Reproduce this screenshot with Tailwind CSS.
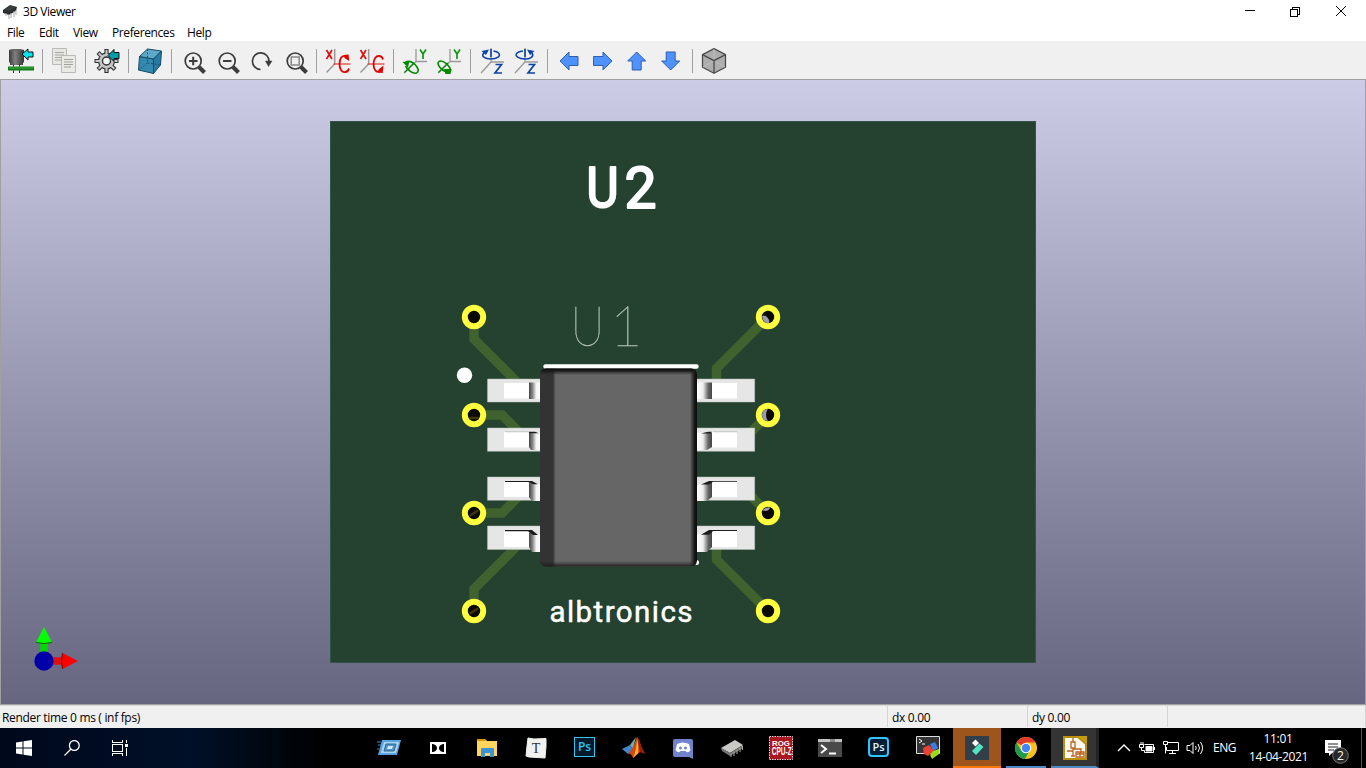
<!DOCTYPE html>
<html lang="en">
<head>
<meta charset="utf-8">
<title>3D Viewer</title>
<script src="https://cdn.jsdelivr.net/npm/@tailwindcss/browser@4"></script>
</head>
<body class="w-[1366px] h-[768px] overflow-hidden bg-white text-black text-[12px] font-['Open_Sans','Noto_Sans',sans-serif]">
<div class="flex flex-col w-[1366px] h-[768px]">

<header class="flex h-[22px] items-center shrink-0">
  <svg class="ml-[2px] w-4 h-4" viewBox="0 0 16 16"><path d="M1 7 8 2 15 4 14 8 7 12 1 10Z" fill="#292d2d"/><path d="M4 10v3M7 11v5M9 10v5M12 8v6M14 7v5" stroke="#aaa" stroke-width="1"/><path d="M2 7 8 3l6 1-6 4Z" fill="#3b3f3f"/></svg>
  <span class="ml-[5px] mt-[2px] text-[12px] tracking-[-0.45px] w-[60px] whitespace-nowrap">3D Viewer</span>
  <svg class="ml-auto mr-[18px] w-[104px] h-[14px]" viewBox="0 0 104 14" fill="none" stroke="#000" stroke-width="1" shape-rendering="crispEdges"><path d="M1 6.500h10M46.500 5.500h7v7h-7zM48.500 5v-1.500h7v7H54"/><path d="m92 2 10 10M102 2 92 12" shape-rendering="auto"/></svg>
</header>

<nav class="flex h-[19px] shrink-0 items-center text-[12px] tracking-[-0.4px] pl-[7px] pt-[2px] whitespace-nowrap">
  <span class="w-8">File</span><span class="w-[34px]">Edit</span><span class="w-[39px]">View</span><span class="w-[75px]">Preferences</span><span>Help</span>
</nav>

<div class="flex h-[38px] shrink-0 bg-[#f0f0f0] pl-1 items-center pt-[2px]">
  <div class="w-[34px] flex justify-center"><svg class="w-[26px] h-[26px]" viewBox="0 0 26 26"><defs><linearGradient id="cap"><stop stop-color="#3a3a3a"/><stop offset=".4" stop-color="#808080"/><stop offset="1" stop-color="#333"/></linearGradient></defs><path d="M1 2q7-2 15 0v11q0 2-1 2v2H2v-2q-1 0-1-2Z" fill="url(#cap)"/><path d="M1 2q7-2 15 0-7 1.500-15 0" fill="#666"/><rect x="0" y="18.500" width="26" height="4" fill="#127a18"/><path d="M1 20h24" stroke="#3fae3f"/><path d="M5.500 16.500v2M11.500 16.500v2M5.500 22.500v2.500M11.500 22.500v2.500" stroke="#222"/><path d="m14 6 6-5v3h5v5h-5v3Z" fill="#00e5ee" stroke="#111"/></svg></div>
  <div class="w-[9px] flex justify-center"><i class="w-px h-6 bg-[#a0a0a0]"></i></div>
  <div class="w-[34px] flex justify-center"><svg class="w-[26px] h-[26px]" viewBox="0 0 26 26"><path d="M1.500.5h14v16h-14Z" fill="#e6e6e3" stroke="#b9b9b7"/><path d="M4 4.500h9M4 7h9M4 9.500h6M4 12h6" stroke="#a9a9a9"/><path d="M10.500 7.500h14v17h-14Z" fill="#e9e9e6" stroke="#b9b9b7"/><path d="M13 11.500h9M13 14h9M13 16.500h9M13 19h7" stroke="#a0a0a0"/></svg></div>
  <div class="w-[9px] flex justify-center"><i class="w-px h-6 bg-[#a0a0a0]"></i></div>
  <div class="w-[34px] flex justify-center"><svg class="w-[26px] h-[26px]" viewBox="0 0 26 26"><g stroke="#333" stroke-width="4.200"><path d="M12.500 1v24M.5 13h24M4 4.500l17 17M21 4.500l-17 17"/></g><circle cx="12.500" cy="13" r="8" fill="#c4c4c4" stroke="#3a3a3a" stroke-width="1.300"/><g stroke="#c8c8c8" stroke-width="2"><path d="M12.500 2v22M1.500 13h22M4.700 5.200l15.600 15.600M20.300 5.200 4.700 20.800"/></g><circle cx="12.500" cy="13" r="4" fill="#f7f7f7" stroke="#333" stroke-width="1.400"/><path d="m14 7.500 6-6v3h5v6h-5v3Z" fill="#049ca5" stroke="#111"/></svg></div>
  <div class="w-[9px] flex justify-center"><i class="w-px h-6 bg-[#a0a0a0]"></i></div>
  <div class="w-[34px] flex justify-center"><svg class="w-[26px] h-[26px]" viewBox="0 0 26 26" stroke="#154b63" stroke-linejoin="round"><path d="m2.500 8.500 14 2.500v14.500L1.500 22Z" fill="#3489b0"/><path d="m2.500 8.500 8-7.500 14 2-8 8Z" fill="#5fa9c8"/><path d="m16.500 11 8-8-1 14-7 8.500Z" fill="#287aa0"/><path d="M10.500 1v14l-9 7M10.500 15l13 2" stroke-dasharray="2 1.500" stroke-width=".8" fill="none"/></svg></div>
  <div class="w-[9px] flex justify-center"><i class="w-px h-6 bg-[#a0a0a0]"></i></div>

  <div class="w-[34px] flex justify-center"><svg class="w-[26px] h-[26px]" viewBox="0 0 26 26" fill="none" stroke="#3c3c3c" stroke-width="1.700"><circle cx="13.200" cy="13" r="8"/><path d="M9 13h8.500M13.200 8.800v8.400" stroke-width="2"/><path d="m19 19 5.500 5.500" stroke-width="4"/></svg></div>
  <div class="w-[34px] flex justify-center"><svg class="w-[26px] h-[26px]" viewBox="0 0 26 26" fill="none" stroke="#3c3c3c" stroke-width="1.700"><circle cx="13.200" cy="13" r="8"/><path d="M9 13h8.500" stroke-width="2"/><path d="m19 19 5.500 5.500" stroke-width="4"/></svg></div>
  <div class="w-[34px] flex justify-center"><svg class="w-[26px] h-[26px]" viewBox="0 0 26 26" fill="none" stroke="#3c3c3c" stroke-width="1.700"><path d="M12.500 21.500a8.300 8.300 0 1 1 8.500-8"/><path d="M17.500 13h6.500L20.500 18.500Z" fill="#3c3c3c" stroke-width=".5"/></svg></div>
  <div class="w-[34px] flex justify-center"><svg class="w-[26px] h-[26px]" viewBox="0 0 26 26" fill="none" stroke="#3c3c3c" stroke-width="1.700"><circle cx="13.200" cy="13" r="8"/><path d="M9.200 9h8v8h-8Z" stroke="#888" stroke-width="1.500"/><path d="m19 19 5.500 5.500" stroke-width="4"/></svg></div>
  <div class="w-[9px] flex justify-center"><i class="w-px h-6 bg-[#a0a0a0]"></i></div>

  <div class="w-[34px] flex justify-center"><svg class="w-[26px] h-[26px]" viewBox="0 0 26 26" fill="none"><path d="M9.700 1v15L1.500 24.500" stroke="#999" stroke-width="1.500"/><path d="m1.500 2 5.500 9M7 2 1.500 11" stroke="#d11" stroke-width="1.700"/><path d="M8.500 16h17" stroke="#e23535" stroke-width="1.200"/><path d="M21 8c-4-1-6.500 2.500-6.500 8s2.500 8.500 5.500 8.200c2.500-.2 3.500-1.700 4-3.700" stroke="#e00000" stroke-width="1.800"/><path d="m19 7 4.500-.5.800 6.500-4.800-3Z" fill="#e00000"/></svg></div>
  <div class="w-[34px] flex justify-center"><svg class="w-[26px] h-[26px]" viewBox="0 0 26 26" fill="none"><path d="M9.700 1v15L1.500 24.500" stroke="#999" stroke-width="1.500"/><path d="m1.500 2 5.500 9M7 2 1.500 11" stroke="#d11" stroke-width="1.700"/><path d="M8.500 16h17" stroke="#e23535" stroke-width="1.200"/><path d="M24 11.500c-.5-2-1.500-3.200-3.500-3.500-3.500-.5-6 3-6 8 0 6 3 9 7 7.500" stroke="#e00000" stroke-width="1.800"/><path d="m19.500 21.500 5-4-.8 7.500-4.700-.5Z" fill="#e00000"/></svg></div>
  <div class="w-[9px] flex justify-center"><i class="w-px h-6 bg-[#a0a0a0]"></i></div>
  <div class="w-[34px] flex justify-center"><svg class="w-[26px] h-[26px]" viewBox="0 0 26 26" fill="none"><path d="M14 1v12.500h11M14 13.500 2 25" stroke="#999" stroke-width="1.300"/><path d="m18 1.500 3 4.500 3-4.500M21 6v5" stroke="#139313" stroke-width="1.700"/><path d="M3.500 18C6 22.500 11 26 14.500 25c3.500-1.500 1-6.500-2.500-9.500-3-2.200-6-3-8.500-1" stroke="#008a00" stroke-width="1.600"/><path d="M2.500 24.500 12 15" stroke="#008a00" stroke-width="1.300"/><path d="m.5 14 7-1-1.500 6.500Z" fill="#008a00"/></svg></div>
  <div class="w-[34px] flex justify-center"><svg class="w-[26px] h-[26px]" viewBox="0 0 26 26" fill="none"><path d="M14 1v12.500h11M14 13.500 2 25" stroke="#999" stroke-width="1.300"/><path d="m18 1.500 3 4.500 3-4.500M21 6v5" stroke="#139313" stroke-width="1.700"/><path d="M10.500 24C5 22 0 16 3 13.500c3.500-2 11.500 4 11.500 9.500" stroke="#008a00" stroke-width="1.600"/><path d="M2.500 24.500 12 15" stroke="#008a00" stroke-width="1.300"/><path d="m8 21 7.500 0-1 5-5 .2Z" fill="#008a00"/></svg></div>
  <div class="w-[9px] flex justify-center"><i class="w-px h-6 bg-[#a0a0a0]"></i></div>
  <div class="w-[34px] flex justify-center"><svg class="w-[26px] h-[26px]" viewBox="0 0 26 26" fill="none"><path d="M12 0v14h13M12 14 2 25" stroke="#999" stroke-width="1.300"/><path d="M5.500 4.500C1 8 6 11 12 11s10.500-3 7.500-6c-1-1-3-1.700-5-2M12 1v8" stroke="#0b43a8" stroke-width="1.600"/><path d="m2.500 3 7.500-1.500-3 5.500Z" fill="#0b43a8"/><path d="M16.500 16.500h6l-6.500 8.500h7" stroke="#0b43a8" stroke-width="1.700"/></svg></div>
  <div class="w-[34px] flex justify-center"><svg class="w-[26px] h-[26px]" viewBox="0 0 26 26" fill="none"><path d="M12 0v14h13M12 14 2 25" stroke="#999" stroke-width="1.300"/><path d="M10 3c-3 .3-5 1-6 2-3 3 2 6 8 6 5 0 9.500-2.500 7-6M12 1v8" stroke="#0b43a8" stroke-width="1.600"/><path d="m14 1.500 7.500 1.500-4.500 4Z" fill="#0b43a8"/><path d="M15.500 16.500h6l-6.500 8.500h7" stroke="#0b43a8" stroke-width="1.700"/></svg></div>
  <div class="w-[9px] flex justify-center"><i class="w-px h-6 bg-[#a0a0a0]"></i></div>
  <div class="w-[34px] flex justify-center"><svg class="w-[26px] h-[26px]" viewBox="0 0 26 26"><path d="M4 13 13 4v4.500h9v9h-9V22Z" fill="#4f92fb" stroke="#2f5fae" stroke-linejoin="round"/></svg></div>
  <div class="w-[34px] flex justify-center"><svg class="w-[26px] h-[26px]" viewBox="0 0 26 26"><path d="M22 13 13 4v4.500H3.500v9H13V22Z" fill="#4f92fb" stroke="#2f5fae" stroke-linejoin="round"/></svg></div>
  <div class="w-[34px] flex justify-center"><svg class="w-[26px] h-[26px]" viewBox="0 0 26 26"><path d="m12.700 4 9 9h-4.500v9H8.200v-9H3.700Z" fill="#4f92fb" stroke="#2f5fae" stroke-linejoin="round"/></svg></div>
  <div class="w-[34px] flex justify-center"><svg class="w-[26px] h-[26px]" viewBox="0 0 26 26"><path d="m12.700 22 9-9h-4.500V4H8.200v9H3.700Z" fill="#4f92fb" stroke="#2f5fae" stroke-linejoin="round"/></svg></div>
  <div class="w-[9px] flex justify-center"><i class="w-px h-6 bg-[#a0a0a0]"></i></div>
  <div class="w-[34px] flex justify-center"><svg class="w-[26px] h-[26px]" viewBox="0 0 26 26" fill="#adadad" stroke="#4a4a4a" stroke-width="1.300" stroke-linejoin="round"><path d="m13 .7 11.500 6v12.500L13 25.300 1.500 19.200V6.700Z"/><path d="M13 1v11M2 19l11-6 11 6" stroke="#c4c4c4" stroke-width=".7"/><path d="M1.500 6.700 13 12.700l11.500-6M13 12.700V25" fill="none"/></svg></div>
</div>

<main class="h-[626px] shrink-0 border border-[#a0a0a0] bg-linear-to-b from-[#cccce6] to-[#666680]">
<svg class="block w-[1364px] h-[624px]" viewBox="1 80 1364 624">
  <defs>
    <linearGradient id="bend"><stop stop-color="#444"/><stop offset=".3" stop-color="#888"/><stop offset=".6" stop-color="#f4f4f4"/><stop offset="1" stop-color="#fff"/></linearGradient>
    <linearGradient id="bendR"><stop stop-color="#fff"/><stop offset=".4" stop-color="#eee"/><stop offset=".75" stop-color="#666"/><stop offset="1" stop-color="#444"/></linearGradient>
    <linearGradient id="edge" x1="540" x2="697" gradientUnits="userSpaceOnUse"><stop stop-color="#333"/><stop offset=".082" stop-color="#333"/><stop offset=".1" stop-color="#666"/><stop offset=".955" stop-color="#666"/><stop offset=".985" stop-color="#151515"/><stop offset="1" stop-color="#0c0c0c"/></linearGradient>
    <linearGradient id="topEdge" x2="0" y2="1"><stop stop-color="#080808"/><stop offset=".35" stop-color="#161616"/><stop offset="1" stop-color="#222" stop-opacity="0"/></linearGradient>
    <linearGradient id="botEdge" x2="0" y2="1"><stop stop-color="#222" stop-opacity="0"/><stop offset="1" stop-color="#181818"/></linearGradient>
    <clipPath id="body"><rect x="540" y="368.500" width="157" height="198" rx="6"/></clipPath>
  </defs>
  <rect x="330.500" y="121.500" width="705" height="541" fill="#24422f" stroke="#2f5547"/>
  <g fill="none" stroke="#3f622f" stroke-width="9.500">
    <path d="M474 317v22l42 42M474 415h28l20 20M474 513h28l20-20M474 611v-22l46-46M768 317l-51.500 51.500V385M768 415l-24 24M768 513l-24-24M768 611l-51.500-51.500V545"/>
  </g>
  <g fill="#0a0a02" stroke="#ffff40" stroke-width="6">
    <circle cx="474" cy="317" r="9.200"/><circle cx="474" cy="415" r="9.200"/><circle cx="474" cy="513" r="9.200"/><circle cx="474" cy="611" r="9.200"/>
    <circle cx="768" cy="317" r="9.200"/><circle cx="768" cy="415" r="9.200"/><circle cx="768" cy="513" r="9.200"/><circle cx="768" cy="611" r="9.200"/>
  </g>
  <g stroke="#40360a" stroke-width="2.500"><path d="M469.500 418h9M470 515.500l8-5M470 613.500l8-5"/></g>
  <path d="M762 316q3-1.500 5.500 1.500t1.500 5.500q-6 1-7-7ZM762 415q0-5.500 6-6.200-4 6.200 0 12.400-6-.7-6-6.200ZM762.500 510.500q3-4 7.500-3.200-1 5-7.500 3.200Z" fill="#9a99b2"/>
  <circle cx="464.500" cy="375.300" r="7.700" fill="#fff"/>
  <g fill="#e6e6e6" stroke="#b5beb6" stroke-width=".5">
    <path d="M487.500 379H541v23h-53.500ZM487.500 428H541v23.300h-53.500ZM487.500 477H541v23.300h-53.500ZM487.500 526H541v23.500h-53.500ZM696 379h58.700v23H696ZM696 428h58.700v23.300H696ZM696 477h58.700v23.300H696ZM696 526h58.700v23.500H696Z"/>
  </g>
  <g fill="#fff">
    <path d="M504 383h25v15.500h-25ZM504 432h25v15.500h-25ZM504 481h25v16h-25ZM504 530.500h25V547h-25ZM712 383h25v15.500h-25ZM712 432h25v15.500h-25ZM712 481h25v16h-25ZM712 530.500h25V547h-25Z"/>
  </g>
  <g fill="url(#bend)">
    <path d="M529 382.500h5v16.500h-5ZM534 382.500h7v16.500h-7Z"/><path d="M529 432.500h12v17.500h-10l-2-3ZM529 483l12 1V501h-9l-3-4ZM529 532.500l12 2V552h-9l-3-5Z"/>
  </g>
  <g fill="url(#bendR)">
    <path d="M697 382.500h15v16.500h-15Z"/><path d="M697 432.500h15V447l-5 3h-10Z"/><path d="M697 485l15-3V497l-5 4h-10Z"/><path d="M697 534.500l15-3V547l-5 5h-10Z"/>
  </g>
  <g fill="#1c1c1c">
    <path d="M529 431.800h6l4 1.500h-10ZM505 480.900h27l6 3.300h-5l-5-2.200h-23ZM505 530h27l6 5h-5l-5-3.800h-23ZM701 433.500l7-1.800h4l-2 1.800ZM701 484.500l8-3.500h28v.8h-24l-4 2.700ZM701 534.700l8-4.700h28v1h-24l-4 3.700Z"/>
  </g>
  <path d="M505 431.800h24M713 431.800h24" stroke="#bbb" stroke-width=".8"/>
  <path d="M545.500 366.500h151" stroke="#fff" stroke-width="4.500" stroke-linecap="round"/>
  <circle cx="696.500" cy="562.500" r="2.500" fill="#fff"/>
  <g clip-path="url(#body)">
    <rect x="540" y="368" width="157" height="199" fill="url(#edge)"/>
    <rect x="540" y="368" width="157" height="7" fill="url(#topEdge)"/>
    <rect x="540" y="561" width="157" height="6" fill="url(#botEdge)"/>
  </g>
  <g fill="#fff" stroke="#fff" stroke-linejoin="round" font-family="Roboto, sans-serif">
    <text x="586.500" y="206.500" font-size="55" stroke-width="2.200" textLength="32" lengthAdjust="spacingAndGlyphs">U</text>
    <text x="624.500" y="207.500" font-size="57" stroke-width="2" textLength="32" lengthAdjust="spacingAndGlyphs">2</text>
    <text x="549.500" y="622" font-size="29.500" stroke-width=".5" textLength="143">albtronics</text>
  </g>
  <g font-size="56" font-family="Lato, sans-serif" font-weight="100" fill="#b5c3b9" stroke="#b5c3b9" stroke-width=".35">
    <text x="570.500" y="346" textLength="34" lengthAdjust="spacingAndGlyphs">U</text><text x="610" y="346">1</text>
  </g>
  <path d="M44 661V640" stroke="#00d800" stroke-width="7.500"/><path d="m44 627 8 15.500q-8 2-16 0Z" fill="#0f0"/><path d="M36 642.500q8 2 16 0" stroke="#075d07" fill="none"/>
  <path d="M44 661h20" stroke="#df1010" stroke-width="7.500"/><path d="m78 661-15.500 8q-2-8 0-16Z" fill="#f00"/><path d="M62.500 653q-2 8 0 16" stroke="#7d0707" fill="none"/>
  <circle cx="44" cy="661" r="9.700" fill="#0000a8"/>
</svg>
</main>

<div class="flex h-[23px] shrink-0 bg-[#f0f0f0] border-t border-[#d8d8d8] items-stretch text-[12px] tracking-[-0.32px] leading-[24px] whitespace-nowrap">
  <div class="w-[887px] pl-[2px]">Render time 0 ms ( inf fps)</div>
  <div class="w-[140px] pl-1 border-l border-[#d4d4d4] mb-px">dx 0.00</div>
  <div class="w-[140px] pl-1 border-l border-[#d4d4d4] mb-px">dy 0.00</div>
  <div class="grow border-x border-[#d4d4d4] mb-px"></div>
</div>

<footer class="flex h-10 shrink-0 bg-[linear-gradient(90deg,#00081c_0%,#000a20_5%,#001028_14%,#00070f_20%,#000_24%)] text-white">
  <div class="w-12 grid place-items-center"><svg class="w-4 h-4" viewBox="0 0 16 16" fill="#fff"><path d="M0 2.500 6.500 1.500v6H0ZM7.500 1.300 16 0v7.500H7.500ZM0 8.500h6.500v6L0 13.500ZM7.500 8.500H16V16l-8.500-1.300Z"/></svg></div>
  <div class="w-12 grid place-items-center"><svg class="w-4 h-4" viewBox="0 0 16 16" fill="none" stroke="#fff" stroke-width="1.300"><circle cx="10.300" cy="5.500" r="4.900"/><path d="M7 9 .5 15.500"/></svg></div>
  <div class="w-12 grid place-items-center"><svg class="w-4 h-4" viewBox="0 0 16 16" fill="none" stroke="#fff" shape-rendering="crispEdges"><path d="M.5 0v2.500h10V0M.5 4.500h10v7H.5ZM.5 16v-2.500h10V16M14.500 0v3M14.500 8v8"/><path d="M13 4h3v3h-3z" fill="#fff" stroke="none"/></svg></div>

  <div class="flex gap-px ml-[221px]">
    <div class="w-12 grid place-items-center"><svg class="w-6 h-6" viewBox="0 0 24 24"><path d="M5 4h19l-4 15H1Z" fill="#58a4e3"/><path d="M7 6h15l-3 11H4Z" fill="#a9d5f3"/><path d="M9 8h10l-2 7H7Z" fill="#4c94cf" stroke="#356587"/><path d="M11 10h5l-1 3h-5Z" fill="#d3eaf8"/><path d="M0 6h4M1 9h3M0 13h2" stroke="#4c8bc0"/></svg></div>
    <div class="w-12 grid place-items-center"><svg class="w-4 h-3" viewBox="0 0 16 12"><path d="M0 0h16v12H0Z" fill="#fff"/><path d="M2 2h1q4 1 4 4t-4 4H2ZM14 2h-1q-4 1-4 4t4 4h1Z" fill="#000"/></svg></div>
    <div class="w-12 grid place-items-center"><svg class="w-[22px] h-[20px]" viewBox="0 0 22 20"><path d="M1 1h8l2 2h10v15H1Z" fill="#ffd55e"/><path d="M1 1h8l1 2H1Z" fill="#d99a00"/><path d="M5 19v-8q0-1 1-1h11q1 0 1 1v8h-4v-4H9v4Z" fill="#3b92d6"/></svg></div>
    <div class="w-12 grid place-items-center"><svg class="w-[22px] h-[22px]" viewBox="0 0 22 22"><path d="m3 1 6 1 12-.5v8L20 21 4 20l-3-1L2 9Z" fill="#f1f1f0" stroke="#f1f1f0" stroke-linejoin="round"/><text x="11" y="16" text-anchor="middle" font-family="Liberation Serif" font-size="14" fill="#333">T</text></svg></div>
    <div class="w-12 grid place-items-center"><div class="w-[21px] h-[20px] border border-[#31c5f0] bg-[#06192b] text-[#31c5f0] text-[12px] leading-[18px] text-center font-semibold -mt-0.5 -ml-px">Ps</div></div>
    <div class="w-12 grid place-items-center"><svg class="w-6 h-6" viewBox="0 0 24 24"><path d="m0 13 8-4 3 4-5 5Z" fill="#4383c8"/><path d="m8 9 6-8-3 12Z" fill="#69b0bd"/><path d="M6 18q5-5 9-17 2 1 4 9l4 8q-4-4-6-1l-6 5q-2-5-5-4Z" fill="#d34810"/><path d="M11 22q4-8 4-21 2 8 1 16Z" fill="#ffb52c"/><path d="M15 1q3 3 4 9l4 8-5-2Z" fill="#92200d"/></svg></div>
    <div class="w-12 grid place-items-center"><svg class="w-5 h-[21px]" viewBox="0 0 20 21"><path d="M2 1h16q2 0 2 2v18l-4-2H2q-2 0-2-2V3q0-2 2-2Z" fill="#6f82ca"/><path d="M4 6q6-3 12 0l1.500 6q-2 3-4 2l-1-1H7.500l-1 1q-2 1-4-2Z" fill="#fff"/><circle cx="7.500" cy="10" r="1.500" fill="#6f82ca"/><circle cx="12.500" cy="10" r="1.500" fill="#6f82ca"/></svg></div>
    <div class="w-12 grid place-items-center"><svg class="w-6 h-6" viewBox="0 0 24 24"><path d="m1 12 14-8 8 5-13 8Z" fill="#c9c9c5"/><path d="m1 12 9 5v3l-8-5ZM10 17l13-8v3l-13 8Z" fill="#777"/><path d="M11 18v3M14 16v4M17 14v4M20 12v4M22.500 10v4" stroke="#aaa"/></svg></div>
    <div class="w-12 grid place-items-center"><svg class="w-6 h-6" viewBox="0 0 24 24" font-family="Liberation Sans" font-weight="bold" fill="#fff"><path d="M.5.5h23v23H.5Z" fill="#a91720" stroke="#f3d6d6" stroke-dasharray="1.500 1"/><text transform="translate(3 9.500) scale(1.050 1)" font-size="7.500">ROG</text><text transform="translate(2.800 19) scale(.62 1)" font-size="10.500">CPU-Z</text></svg></div>
    <div class="w-12 grid place-items-center"><svg class="w-6 h-[18px]" viewBox="0 0 24 18"><path d="M0 0h24v18H0Z" fill="#4a4a4a"/><path d="M0 0h24v3H0Z" fill="#c3c3c3"/><path d="M12 0h5v3h-5z" fill="#8a8a8a"/><path d="m3 6 5 4-5 4M11 14.500h7" fill="none" stroke="#fff" stroke-width="2"/></svg></div>
    <div class="w-12 grid place-items-center"><div class="w-[21px] h-[20px] rounded border-2 border-[#31c5ff] bg-[#001e36] text-[#e4f6ff] text-[11px] leading-[15px] text-center font-semibold -mt-0.5 -ml-px">Ps</div></div>
    <div class="w-12 grid place-items-center"><svg class="w-6 h-6" viewBox="0 0 24 24"><path d="M.5.5h23v17H.5Z" fill="#343434" stroke="#ddd"/><path d="m3 3 3 2-3 2M6 8h3" stroke="#fff" fill="none"/><path d="m14 8 5-2 3 6-5 3Z" fill="#3c7cdf"/><path d="m7 12 6-3 5 6-6 5-4-2Z" fill="#ea4136"/><path d="m17 15 6-2v5l-7 5-2-4Z" fill="#9bdd1c"/></svg></div>
    <div class="w-12 grid place-items-center bg-[#9d551c] border-b-2 border-[#ff7800]"><svg class="w-6 h-6 mt-0.5" viewBox="0 0 24 24"><path d="M0 0h24v24H0Z" fill="#323e48"/><path d="m7 7 3.500-3.500L14 7l-3.500 3.500Z" fill="#fff"/><path d="m7 15 7.500-7.500L18.500 11 11 19Z" fill="#53e3c2"/></svg></div>
    <div class="w-12 px-1"><div class="h-10 grid place-items-center border-b-2 border-[#4d8bc0]"><svg class="w-6 h-6 mt-0.5" viewBox="0 0 24 24"><circle cx="12" cy="12" r="11" fill="#fbc116"/><path d="M12 12 2.500 6.500A11 11 0 0 1 21.500 6.500H12Z" fill="#e33b2e"/><path d="M2.500 6.500A11 11 0 0 0 11 23l5-9-4-2-5 2Z" fill="#219a50"/><circle cx="12" cy="12" r="5.300" fill="#fff"/><circle cx="12" cy="12" r="4.200" fill="#4285f4"/></svg></div></div>
    <div class="w-12 grid place-items-center bg-[#343434] border-b-2 border-[#4d8bc0] border-r-[3px] border-r-[#222]"><svg class="w-6 h-6 mt-0.5 ml-0.5" viewBox="0 0 24 24"><path d="M1 1h14l8 7v15H1Z" fill="#fafaf3" stroke="#b98e08" stroke-width="2"/><path d="m14 0 10 8V0Z" fill="#c59d0a"/><path d="M10 2v4M8 6h4v6H8ZM10 12v8M4 15h6M10 13h8v4M13 16h8v5h-8ZM13 18h8M17 16v5M8 20h4" fill="none" stroke="#bb6320" stroke-width="1.300"/></svg></div>
  </div>

  <div class="flex items-center ml-[18px]">
    <svg class="w-[14px] h-4" viewBox="0 0 14 16" fill="none" stroke="#fff" stroke-width="1.400"><path d="m1 11 6-6 6 6"/></svg>
    <svg class="w-4 h-4 ml-[8px]" viewBox="0 0 16 16" fill="none" stroke="#fff"><path d="M5.500 4.500h9v8h-9v-2M2 2v3M4 2v3M.5 4.500h4v3h-4ZM2.500 7.500v3h3M15.500 7v3"/><path d="M7 6.500h6v4.500H7Z" fill="#fff"/></svg>
    <svg class="w-4 h-4 ml-[8px]" viewBox="0 0 16 16" fill="none" stroke="#fff"><path d="M5 2.500h10.500v8h-12V7M9.500 10.500v3M6 13.500h7M.5 1.500h4v3h-4ZM2.500 4.500v9"/></svg>
    <svg class="w-[18px] h-4 ml-[7px]" viewBox="0 0 18 16" fill="none" stroke="#fff"><path d="M1 5.500h3l3-3v11l-3-3H1ZM9.500 6q1.500 2 0 4M12 4q3 4 0 8M14.500 2q4 6 0 12"/></svg>
    <span class="ml-[9px] w-[23px] text-[12px] tracking-[-0.45px]">ENG</span>
    <div class="ml-[13px] w-[58px] text-center text-[12px] leading-[18px] tracking-[-0.35px] whitespace-nowrap"><div>11:01</div><div>14-04-2021</div></div>
    <svg class="ml-[17px] w-[26px] h-7 mt-1" viewBox="0 0 26 28"><path d="M1 4h16v13H8l-3 3v-3H1Z" fill="#fff"/><path d="M4 8h10M4 11h10M4 14h6" stroke="#222"/><circle cx="16.500" cy="19.500" r="7.800" fill="#292929" stroke="#777"/><text x="16.500" y="24" text-anchor="middle" font-size="12" font-family="Open Sans" fill="#fff">2</text></svg>
  </div>
  <i class="ml-auto mr-1 w-px bg-[#555]"></i>
</footer>
</div>
</body>
</html>
